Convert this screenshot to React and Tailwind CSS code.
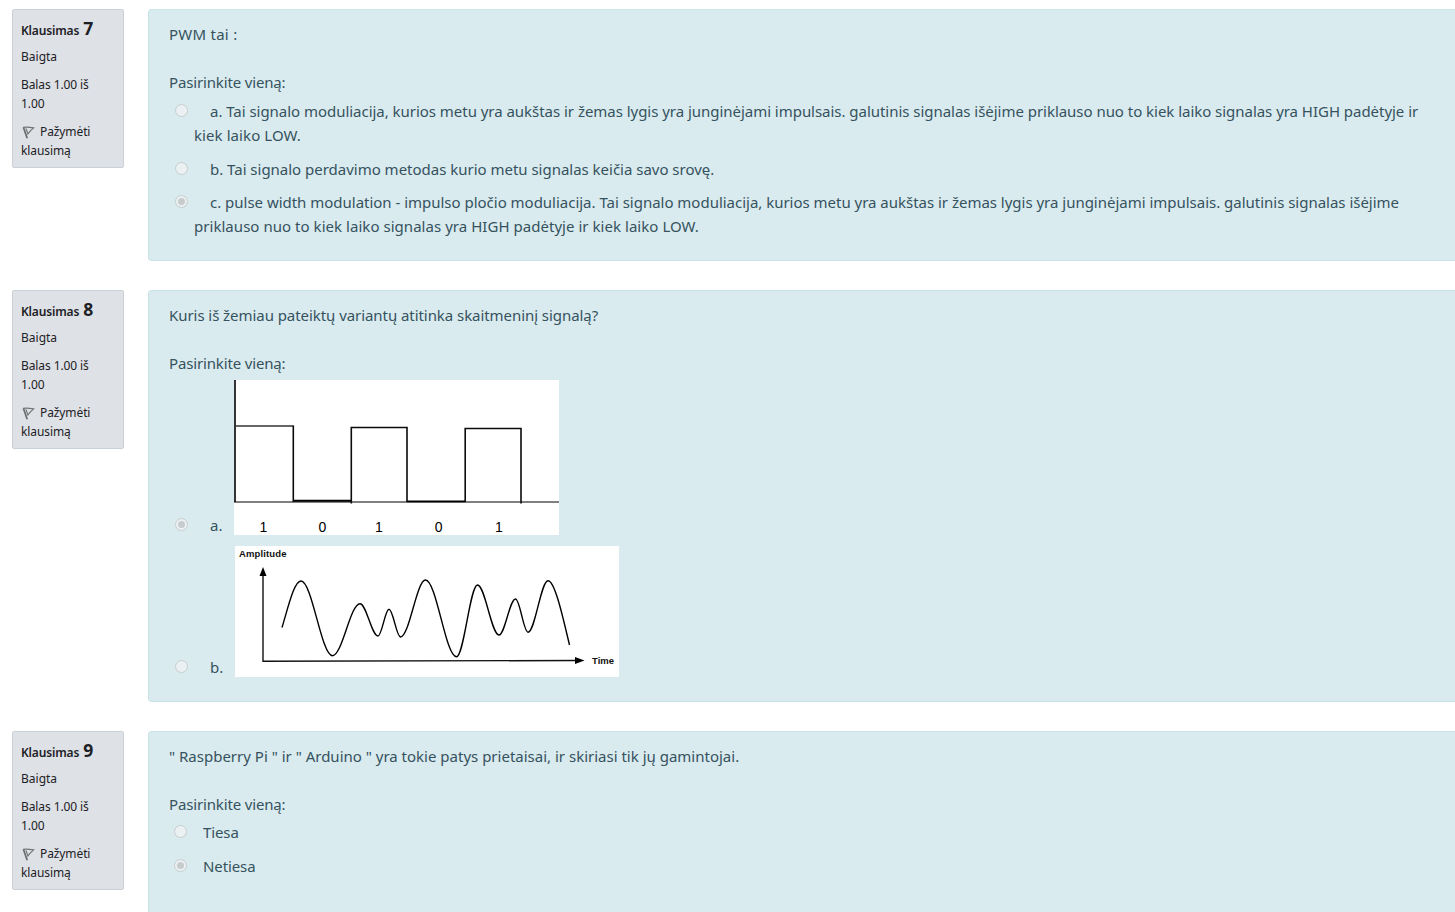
function Flag() {
  return (
    <svg className="mr-[5px] ml-[1px] inline-block h-[13px] w-[13px] align-[-3px]" viewBox="0 0 13 13" fill="none">
      <path d="M1.4 1.2 L5.2 12.2" stroke="#6a6b6d" strokeWidth="1.7" />
      <path d="M1.2 1.4 C4 .9 8 1.3 11.6 1.9 C9.6 3.6 7.6 5.4 5.9 8 L3.9 2.4" stroke="#737476" strokeWidth="1.2" />
    </svg>
  );
}

function Info({ number }) {
  return (
    <div className="h-[159px] w-[112px] shrink-0 rounded-[2px] border border-[#cad0d7] bg-[#dee2e6] pt-[6px] pl-[8px] text-[12px] leading-[19px] whitespace-nowrap text-[#1d2125]">
      <h3 className="flex h-[24px] items-baseline gap-[4px] leading-[24px]">
        <span className="text-[12px] font-semibold tracking-[-0.15px]">Klausimas</span>
        <span className="text-[17.5px] font-bold">{number}</span>
      </h3>
      <div className="mt-[7px]">Baigta</div>
      <div className="mt-[9px] tracking-[-0.1px]">Balas 1.00 iš<br />1.00</div>
      <div className="mt-[9px] tracking-[-0.1px]"><Flag />Pažymėti<br />klausimą</div>
    </div>
  );
}

function Radio({ checked }) {
  return (
    <span className="flex h-[13px] w-[13px] shrink-0 items-center justify-center rounded-full border border-[#c8cdce] bg-[#ebf0f2]">
      {checked && <span className="h-[7px] w-[7px] rounded-full bg-[#c7cbcc]" />}
    </span>
  );
}

function Question({ number, height, children }) {
  return (
    <section className="flex gap-[24px]">
      <Info number={number} />
      <div className={"min-w-0 flex-1 rounded-l-[4px] border border-r-0 border-[#c8e4e8] bg-[#d9ebee] pt-[12px] pl-[20px] text-[15px] leading-[24px] whitespace-nowrap text-[#36525f] " + height}>
        {children}
      </div>
    </section>
  );
}

function Prompt() {
  return <div className="mt-[24px] tracking-[-0.15px]">Pasirinkite vieną:</div>;
}

function TextAnswer({ checked, first, second, margin, firstTracking = "", secondTracking = "" }) {
  return (
    <div className={"flex pl-[6px] " + margin}>
      <div className="pt-[5px]"><Radio checked={checked} /></div>
      <div className="pl-[6px]">
        <div className={"pl-[16px] " + firstTracking}>{first}</div>
        {second && <div className={secondTracking}>{second}</div>}
      </div>
    </div>
  );
}

function DigitalSignal() {
  return (
    <svg className="block h-[155px] w-[325px] bg-white" viewBox="0 0 325 155" fill="none">
      <path d="M0 122H325" stroke="#575354" strokeWidth="1.7" />
      <path d="M1 0V122" stroke="#000" strokeWidth="1.6" />
      <path d="M2 46H59.3" stroke="#333" strokeWidth="1.7" />
      <path d="M59.3 45.5V122M117.3 123.5V47.5H173V122M231.2 122V48.5H287V123.5" stroke="#0b0b0b" strokeWidth="1.6" />
      <path d="M60 120.7H117" stroke="#000" strokeWidth="2" />
      <path d="M173 121.4H231" stroke="#000" strokeWidth="1.7" />
      <g fill="#000" fontFamily="Liberation Sans, sans-serif" fontSize="14" textAnchor="middle">
        <text x="29.5" y="152">1</text>
        <text x="88.5" y="152">0</text>
        <text x="145" y="152">1</text>
        <text x="204.7" y="152">0</text>
        <text x="265" y="152">1</text>
      </g>
    </svg>
  );
}

const wave = [
  [66, 35], [97.5, 109.7], [125, 57.7], [143, 90], [154, 63.3], [165.5, 91], [190.5, 34],
  [221.5, 110.7], [242.5, 39], [264, 89], [280.5, 53], [293, 86.2], [313, 34.7],
];
let wavePath = "M47 81.5C53 62 59 35 66 35";
for (let i = 1; i < wave.length; i++) {
  const [x0, y0] = wave[i - 1];
  const [x1, y1] = wave[i];
  const d = (x1 - x0) * 0.355;
  wavePath += `C${x0 + d} ${y0} ${x1 - d} ${y1} ${x1} ${y1}`;
}
wavePath += "C320 34.7 328 72 334.5 99";

function AnalogSignal() {
  return (
    <svg className="block h-[131px] w-[384px] bg-white" viewBox="0 0 384 131" fill="none">
      <path d="M28 28V115.3L342 114.5" stroke="#111" strokeWidth="1.4" />
      <path d="M28 21L31.5 30H24.5ZM349.5 114.5L340 118V111Z" fill="#000" />
      <path d={wavePath} stroke="#000" strokeWidth="1.4" />
      <g fill="#111" fontFamily="Liberation Sans, sans-serif" fontWeight="700" fontSize="9.5">
        <text x="4" y="11" textLength="47.5">Amplitude</text>
        <text x="357" y="117.5" textLength="22">Time</text>
      </g>
    </svg>
  );
}

export default function App() {
  return (
    <main className="flex h-[912px] flex-col gap-[29px] overflow-hidden bg-white pt-[9px] pl-[12px] font-['Noto_Sans',sans-serif]">
      <Question number="7" height="h-[252px]">
        <div className="tracking-[0.25px]">PWM tai :</div>
        <Prompt />
        <TextAnswer
          margin="mt-[5px]"
          firstTracking="tracking-[-0.033px]"
          secondTracking="tracking-[0.08px]"
          first="a. Tai signalo moduliacija, kurios metu yra aukštas ir žemas lygis yra junginėjami impulsais. galutinis signalas išėjime priklauso nuo to kiek laiko signalas yra HIGH padėtyje ir"
          second="kiek laiko LOW."
        />
        <TextAnswer
          margin="mt-[10px]"
          firstTracking="tracking-[-0.015px]"
          first="b. Tai signalo perdavimo metodas kurio metu signalas keičia savo srovę."
        />
        <TextAnswer
          margin="mt-[9px]"
          checked
          firstTracking="tracking-[-0.016px]"
          secondTracking="tracking-[0.04px]"
          first="c. pulse width modulation - impulso pločio moduliacija. Tai signalo moduliacija, kurios metu yra aukštas ir žemas lygis yra junginėjami impulsais. galutinis signalas išėjime"
          second="priklauso nuo to kiek laiko signalas yra HIGH padėtyje ir kiek laiko LOW."
        />
      </Question>
      <Question number="8" height="h-[412px]">
        <div className="tracking-[-0.06px]">Kuris iš žemiau pateiktų variantų atitinka skaitmeninį signalą?</div>
        <Prompt />
        <div className="mt-[5px] flex items-end pl-[6px]">
          <div className="pb-[4px]"><Radio checked /></div>
          <div className="w-[46px] pl-[22px] leading-[20px]">a.</div>
          <DigitalSignal />
        </div>
        <div className="mt-[11px] flex items-end pl-[6px]">
          <div className="pb-[4px]"><Radio /></div>
          <div className="w-[47px] pl-[22px] leading-[20px]">b.</div>
          <AnalogSignal />
        </div>
      </Question>
      <Question number="9" height="h-[252px]">
        <div>" Raspberry Pi " ir " Arduino " yra tokie patys prietaisai, ir skiriasi tik jų gamintojai.</div>
        <Prompt />
        <div className="mt-[4px] flex gap-[16px] pl-[5px] tracking-[-0.1px]">
          <div className="pt-[5px]"><Radio /></div>
          Tiesa
        </div>
        <div className="mt-[10px] flex gap-[16px] pl-[5px] tracking-[-0.1px]">
          <div className="pt-[5px]"><Radio checked /></div>
          Netiesa
        </div>
      </Question>
    </main>
  );
}
